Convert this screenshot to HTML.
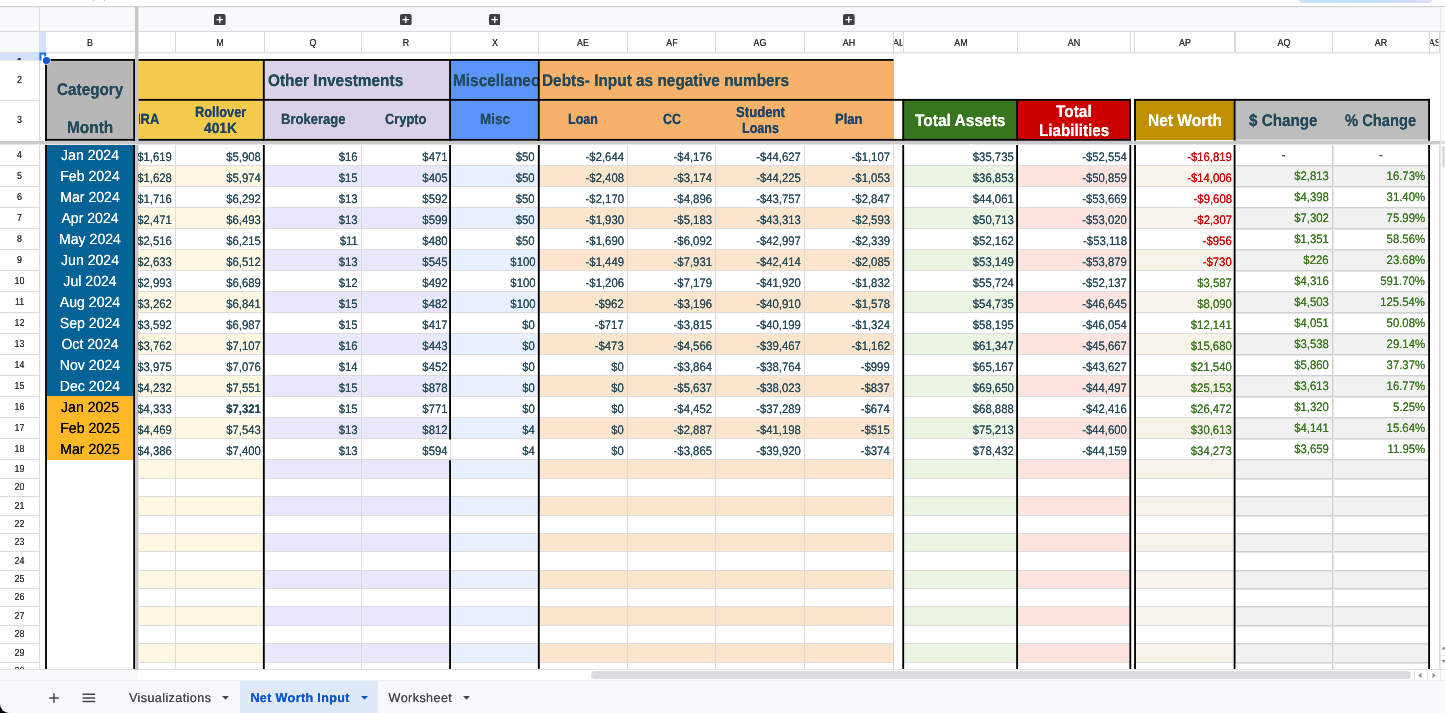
<!DOCTYPE html>
<html><head><meta charset="utf-8"><title>Net Worth Input</title>
<style>
html,body{margin:0;padding:0;background:#fff}
body{width:1445px;height:713px;overflow:hidden;position:relative;font-family:"Liberation Sans",sans-serif;text-rendering:geometricPrecision}
#s{position:absolute;left:0;top:0;width:1445px;height:713px;overflow:hidden;will-change:transform}
#s div,#s svg{position:absolute}
.ch{text-shadow:0 0 0.3px currentColor;font-size:10.2px;color:#333639;text-align:center;transform:scaleX(0.87)}
.rh{text-shadow:0 0 0.3px currentColor;font-size:10.2px;color:#333639;text-align:center;transform:scaleX(0.87)}
.d{font-size:12.4px;line-height:21px;height:21px;white-space:nowrap;overflow:hidden}
.d div{transform:scaleX(0.915);transform-origin:100% 50%;line-height:21px;text-shadow:0 0 0.4px currentColor}
.mo{text-shadow:0 0 0.4px currentColor;font-size:14.7px;line-height:22px;height:22px;text-align:center;white-space:nowrap;transform:scaleX(0.96)}
</style></head><body><div id="s">
<div style="left:0px;top:0px;width:1445px;height:6px;background:#fff;"></div>
<div style="left:1298px;top:-8px;width:135px;height:10.5px;border-radius:6px;background:linear-gradient(90deg,#c9e6ff,#c4dcff 60%,#dfe0ff)"></div>
<div style="left:0px;top:6px;width:1445px;height:1px;background:#d2d2d2;"></div>
<div style="left:0px;top:7px;width:1445px;height:24px;background:#f8f9fa;"></div>
<div style="left:0px;top:7px;width:1445px;height:1px;background:#f0f0f0;"></div>
<div style="left:0px;top:31px;width:1445px;height:1px;background:#d9dbd9;"></div>
<div style="left:0px;top:32px;width:1445px;height:20px;background:#fff;"></div>
<div style="left:0px;top:32px;width:39px;height:20px;background:#f8f9fa;"></div>
<div style="left:0px;top:52px;width:1445px;height:1px;background:#dfe0df;"></div>
<div style="left:0px;top:53px;width:1445px;height:1px;background:#eeefee;"></div>
<div style="left:93px;top:0px;width:1px;height:1px;background:#bbb;"></div>
<div style="left:104px;top:0px;width:1px;height:1px;background:#bbb;"></div>
<div style="left:40px;top:32px;width:6px;height:21px;background:#d3e3fd;"></div>
<div class="ch" style="left:60px;top:33px;width:60px;height:20px;line-height:21px">B</div>
<div class="ch" style="left:190px;top:33px;width:60px;height:20px;line-height:21px">M</div>
<div class="ch" style="left:283px;top:33px;width:60px;height:20px;line-height:21px">Q</div>
<div class="ch" style="left:376px;top:33px;width:60px;height:20px;line-height:21px">R</div>
<div class="ch" style="left:464.5px;top:33px;width:60px;height:20px;line-height:21px">X</div>
<div class="ch" style="left:553px;top:33px;width:60px;height:20px;line-height:21px">AE</div>
<div class="ch" style="left:641.5px;top:33px;width:60px;height:20px;line-height:21px">AF</div>
<div class="ch" style="left:730px;top:33px;width:60px;height:20px;line-height:21px">AG</div>
<div class="ch" style="left:819px;top:33px;width:60px;height:20px;line-height:21px">AH</div>
<div class="ch" style="left:930.5px;top:33px;width:60px;height:20px;line-height:21px">AM</div>
<div class="ch" style="left:1044px;top:33px;width:60px;height:20px;line-height:21px">AN</div>
<div class="ch" style="left:1154.5px;top:33px;width:60px;height:20px;line-height:21px">AP</div>
<div class="ch" style="left:1253.5px;top:33px;width:60px;height:20px;line-height:21px">AQ</div>
<div class="ch" style="left:1351px;top:33px;width:60px;height:20px;line-height:21px">AR</div>
<div class="ch" style="left:894px;top:33px;width:9px;height:20px;line-height:21px;overflow:hidden;"><span style="margin-left:-2px;display:inline-block;width:13px">AL</span></div>
<div class="ch" style="left:1430px;top:33px;width:9px;height:20px;line-height:21px;overflow:hidden;"><span style="margin-left:-2px;display:inline-block;width:13px">AS</span></div>
<div style="left:175px;top:32px;width:1px;height:20px;background:#d9dbd9;"></div>
<div style="left:264px;top:32px;width:1px;height:20px;background:#d9dbd9;"></div>
<div style="left:361px;top:32px;width:1px;height:20px;background:#d9dbd9;"></div>
<div style="left:450px;top:32px;width:1px;height:20px;background:#d9dbd9;"></div>
<div style="left:538px;top:32px;width:1px;height:20px;background:#d9dbd9;"></div>
<div style="left:627px;top:32px;width:1px;height:20px;background:#d9dbd9;"></div>
<div style="left:715px;top:32px;width:1px;height:20px;background:#d9dbd9;"></div>
<div style="left:804px;top:32px;width:1px;height:20px;background:#d9dbd9;"></div>
<div style="left:893px;top:32px;width:1px;height:20px;background:#d9dbd9;"></div>
<div style="left:903px;top:32px;width:1px;height:20px;background:#d9dbd9;"></div>
<div style="left:1017px;top:32px;width:1px;height:20px;background:#d9dbd9;"></div>
<div style="left:1130px;top:32px;width:1px;height:20px;background:#d9dbd9;"></div>
<div style="left:1134px;top:32px;width:1px;height:20px;background:#d9dbd9;"></div>
<div style="left:1332px;top:32px;width:1px;height:20px;background:#d9dbd9;"></div>
<div style="left:1429px;top:32px;width:1px;height:20px;background:#d9dbd9;"></div>
<div style="left:1439px;top:32px;width:1px;height:20px;background:#d9dbd9;"></div>
<div style="left:1234px;top:32px;width:2px;height:20px;background:#d9dbd9;"></div>
<div style="left:39px;top:7px;width:1px;height:663px;background:#dcdcdc;"></div>
<div style="left:1440px;top:7px;width:5px;height:24px;background:#f8f9fa;"></div>
<div style="left:1440px;top:32px;width:5px;height:638px;background:#fbfbfb;"></div>
<div style="left:1440px;top:7px;width:1px;height:663px;background:#e6e6e6;"></div>
<div style="left:1441px;top:141px;width:4px;height:3px;background:#d6e0f0;"></div>
<div style="left:1442px;top:146px;width:8px;height:22px;border-radius:3px;background:#dcdee2"></div>
<svg style="left:214.2px;top:13.7px" width="11.6" height="11.4" viewBox="0 0 11.6 11.4"><rect width="11.6" height="11.4" rx="2" fill="#3c4043"/><path d="M5.8 2.4v6.6M2.5 5.7h6.6" stroke="#fff" stroke-width="1.3"/></svg>
<svg style="left:400.2px;top:13.7px" width="11.6" height="11.4" viewBox="0 0 11.6 11.4"><rect width="11.6" height="11.4" rx="2" fill="#3c4043"/><path d="M5.8 2.4v6.6M2.5 5.7h6.6" stroke="#fff" stroke-width="1.3"/></svg>
<svg style="left:488.7px;top:13.7px" width="11.6" height="11.4" viewBox="0 0 11.6 11.4"><rect width="11.6" height="11.4" rx="2" fill="#3c4043"/><path d="M5.8 2.4v6.6M2.5 5.7h6.6" stroke="#fff" stroke-width="1.3"/></svg>
<svg style="left:843.2px;top:13.7px" width="11.6" height="11.4" viewBox="0 0 11.6 11.4"><rect width="11.6" height="11.4" rx="2" fill="#3c4043"/><path d="M5.8 2.4v6.6M2.5 5.7h6.6" stroke="#fff" stroke-width="1.3"/></svg>
<div style="left:0px;top:53px;width:39px;height:7px;background:#d3e3fd;"></div>
<div style="left:0;top:53px;width:39px;height:7px;overflow:hidden"><div class="rh" style="left:0;top:4px;width:39px;height:11px;line-height:11px;color:#1f2a4a;font-weight:bold;transform:translateY(-0.1px) scaleX(0.9)">1</div></div>
<div style="left:0px;top:60px;width:39px;height:1px;background:#e8e8e8;"></div>
<div style="left:0px;top:100px;width:39px;height:1px;background:#dbdbdb;"></div>
<div class="rh" style="left:0;top:61px;width:39px;height:39px;line-height:39px">2</div>
<div class="rh" style="left:0;top:101px;width:39px;height:39px;line-height:39px">3</div>
<div class="rh" style="left:0;top:145px;width:39px;height:20px;line-height:21px">4</div>
<div style="left:0px;top:165px;width:39px;height:1px;background:#dbdbdb;"></div>
<div class="rh" style="left:0;top:166px;width:39px;height:20px;line-height:21px">5</div>
<div style="left:0px;top:186px;width:39px;height:1px;background:#dbdbdb;"></div>
<div class="rh" style="left:0;top:187px;width:39px;height:20px;line-height:21px">6</div>
<div style="left:0px;top:207px;width:39px;height:1px;background:#dbdbdb;"></div>
<div class="rh" style="left:0;top:208px;width:39px;height:20px;line-height:21px">7</div>
<div style="left:0px;top:228px;width:39px;height:1px;background:#dbdbdb;"></div>
<div class="rh" style="left:0;top:229px;width:39px;height:20px;line-height:21px">8</div>
<div style="left:0px;top:249px;width:39px;height:1px;background:#dbdbdb;"></div>
<div class="rh" style="left:0;top:250px;width:39px;height:20px;line-height:21px">9</div>
<div style="left:0px;top:270px;width:39px;height:1px;background:#dbdbdb;"></div>
<div class="rh" style="left:0;top:271px;width:39px;height:20px;line-height:21px">10</div>
<div style="left:0px;top:291px;width:39px;height:1px;background:#dbdbdb;"></div>
<div class="rh" style="left:0;top:292px;width:39px;height:20px;line-height:21px">11</div>
<div style="left:0px;top:312px;width:39px;height:1px;background:#dbdbdb;"></div>
<div class="rh" style="left:0;top:313px;width:39px;height:20px;line-height:21px">12</div>
<div style="left:0px;top:333px;width:39px;height:1px;background:#dbdbdb;"></div>
<div class="rh" style="left:0;top:334px;width:39px;height:20px;line-height:21px">13</div>
<div style="left:0px;top:354px;width:39px;height:1px;background:#dbdbdb;"></div>
<div class="rh" style="left:0;top:355px;width:39px;height:20px;line-height:21px">14</div>
<div style="left:0px;top:375px;width:39px;height:1px;background:#dbdbdb;"></div>
<div class="rh" style="left:0;top:376px;width:39px;height:20px;line-height:21px">15</div>
<div style="left:0px;top:396px;width:39px;height:1px;background:#dbdbdb;"></div>
<div class="rh" style="left:0;top:397px;width:39px;height:20px;line-height:21px">16</div>
<div style="left:0px;top:417px;width:39px;height:1px;background:#dbdbdb;"></div>
<div class="rh" style="left:0;top:418px;width:39px;height:20px;line-height:21px">17</div>
<div style="left:0px;top:438px;width:39px;height:1px;background:#dbdbdb;"></div>
<div class="rh" style="left:0;top:439px;width:39px;height:20px;line-height:21px">18</div>
<div style="left:0px;top:459px;width:39px;height:1px;background:#dbdbdb;"></div>
<div class="rh" style="left:0;top:460px;width:39px;height:18px;line-height:19px">19</div>
<div style="left:0px;top:478px;width:39px;height:1px;background:#dbdbdb;"></div>
<div class="rh" style="left:0;top:479px;width:39px;height:17px;line-height:18px">20</div>
<div style="left:0px;top:496px;width:39px;height:1px;background:#dbdbdb;"></div>
<div class="rh" style="left:0;top:497px;width:39px;height:18px;line-height:19px">21</div>
<div style="left:0px;top:515px;width:39px;height:1px;background:#dbdbdb;"></div>
<div class="rh" style="left:0;top:516px;width:39px;height:17px;line-height:18px">22</div>
<div style="left:0px;top:533px;width:39px;height:1px;background:#dbdbdb;"></div>
<div class="rh" style="left:0;top:534px;width:39px;height:17px;line-height:18px">23</div>
<div style="left:0px;top:551px;width:39px;height:1px;background:#dbdbdb;"></div>
<div class="rh" style="left:0;top:552px;width:39px;height:18px;line-height:19px">24</div>
<div style="left:0px;top:570px;width:39px;height:1px;background:#dbdbdb;"></div>
<div class="rh" style="left:0;top:571px;width:39px;height:17px;line-height:18px">25</div>
<div style="left:0px;top:588px;width:39px;height:1px;background:#dbdbdb;"></div>
<div class="rh" style="left:0;top:589px;width:39px;height:17px;line-height:18px">26</div>
<div style="left:0px;top:606px;width:39px;height:1px;background:#dbdbdb;"></div>
<div class="rh" style="left:0;top:607px;width:39px;height:18px;line-height:19px">27</div>
<div style="left:0px;top:625px;width:39px;height:1px;background:#dbdbdb;"></div>
<div class="rh" style="left:0;top:626px;width:39px;height:17px;line-height:18px">28</div>
<div style="left:0px;top:643px;width:39px;height:1px;background:#dbdbdb;"></div>
<div class="rh" style="left:0;top:644px;width:39px;height:18px;line-height:19px">29</div>
<div style="left:0px;top:662px;width:39px;height:1px;background:#dbdbdb;"></div>
<div class="rh" style="left:0;top:663px;width:39px;height:6px;overflow:hidden;line-height:18px">30</div>
<div style="left:138px;top:166px;width:38px;height:20px;background:#fef8e3;"></div>
<div style="left:176px;top:166px;width:89px;height:20px;background:#fef8e3;"></div>
<div style="left:265px;top:166px;width:97px;height:20px;background:#e8e7fc;"></div>
<div style="left:362px;top:166px;width:89px;height:20px;background:#e8e7fc;"></div>
<div style="left:451px;top:166px;width:88px;height:20px;background:#e8f0fe;"></div>
<div style="left:539px;top:166px;width:89px;height:20px;background:#fce5cd;"></div>
<div style="left:628px;top:166px;width:88px;height:20px;background:#fce5cd;"></div>
<div style="left:716px;top:166px;width:89px;height:20px;background:#fce5cd;"></div>
<div style="left:805px;top:166px;width:89px;height:20px;background:#fce5cd;"></div>
<div style="left:904px;top:166px;width:114px;height:20px;background:#ebf5e2;"></div>
<div style="left:1018px;top:166px;width:113px;height:20px;background:#fde4df;"></div>
<div style="left:1135px;top:166px;width:100px;height:20px;background:#f8f3ea;"></div>
<div style="left:1235px;top:166px;width:98px;height:20px;background:#f1f1f1;"></div>
<div style="left:1333px;top:166px;width:97px;height:20px;background:#f1f1f1;"></div>
<div style="left:138px;top:208px;width:38px;height:20px;background:#fef8e3;"></div>
<div style="left:176px;top:208px;width:89px;height:20px;background:#fef8e3;"></div>
<div style="left:265px;top:208px;width:97px;height:20px;background:#e8e7fc;"></div>
<div style="left:362px;top:208px;width:89px;height:20px;background:#e8e7fc;"></div>
<div style="left:451px;top:208px;width:88px;height:20px;background:#e8f0fe;"></div>
<div style="left:539px;top:208px;width:89px;height:20px;background:#fce5cd;"></div>
<div style="left:628px;top:208px;width:88px;height:20px;background:#fce5cd;"></div>
<div style="left:716px;top:208px;width:89px;height:20px;background:#fce5cd;"></div>
<div style="left:805px;top:208px;width:89px;height:20px;background:#fce5cd;"></div>
<div style="left:904px;top:208px;width:114px;height:20px;background:#ebf5e2;"></div>
<div style="left:1018px;top:208px;width:113px;height:20px;background:#fde4df;"></div>
<div style="left:1135px;top:208px;width:100px;height:20px;background:#f8f3ea;"></div>
<div style="left:1235px;top:208px;width:98px;height:20px;background:#f1f1f1;"></div>
<div style="left:1333px;top:208px;width:97px;height:20px;background:#f1f1f1;"></div>
<div style="left:138px;top:250px;width:38px;height:20px;background:#fef8e3;"></div>
<div style="left:176px;top:250px;width:89px;height:20px;background:#fef8e3;"></div>
<div style="left:265px;top:250px;width:97px;height:20px;background:#e8e7fc;"></div>
<div style="left:362px;top:250px;width:89px;height:20px;background:#e8e7fc;"></div>
<div style="left:451px;top:250px;width:88px;height:20px;background:#e8f0fe;"></div>
<div style="left:539px;top:250px;width:89px;height:20px;background:#fce5cd;"></div>
<div style="left:628px;top:250px;width:88px;height:20px;background:#fce5cd;"></div>
<div style="left:716px;top:250px;width:89px;height:20px;background:#fce5cd;"></div>
<div style="left:805px;top:250px;width:89px;height:20px;background:#fce5cd;"></div>
<div style="left:904px;top:250px;width:114px;height:20px;background:#ebf5e2;"></div>
<div style="left:1018px;top:250px;width:113px;height:20px;background:#fde4df;"></div>
<div style="left:1135px;top:250px;width:100px;height:20px;background:#f8f3ea;"></div>
<div style="left:1235px;top:250px;width:98px;height:20px;background:#f1f1f1;"></div>
<div style="left:1333px;top:250px;width:97px;height:20px;background:#f1f1f1;"></div>
<div style="left:138px;top:292px;width:38px;height:20px;background:#fef8e3;"></div>
<div style="left:176px;top:292px;width:89px;height:20px;background:#fef8e3;"></div>
<div style="left:265px;top:292px;width:97px;height:20px;background:#e8e7fc;"></div>
<div style="left:362px;top:292px;width:89px;height:20px;background:#e8e7fc;"></div>
<div style="left:451px;top:292px;width:88px;height:20px;background:#e8f0fe;"></div>
<div style="left:539px;top:292px;width:89px;height:20px;background:#fce5cd;"></div>
<div style="left:628px;top:292px;width:88px;height:20px;background:#fce5cd;"></div>
<div style="left:716px;top:292px;width:89px;height:20px;background:#fce5cd;"></div>
<div style="left:805px;top:292px;width:89px;height:20px;background:#fce5cd;"></div>
<div style="left:904px;top:292px;width:114px;height:20px;background:#ebf5e2;"></div>
<div style="left:1018px;top:292px;width:113px;height:20px;background:#fde4df;"></div>
<div style="left:1135px;top:292px;width:100px;height:20px;background:#f8f3ea;"></div>
<div style="left:1235px;top:292px;width:98px;height:20px;background:#f1f1f1;"></div>
<div style="left:1333px;top:292px;width:97px;height:20px;background:#f1f1f1;"></div>
<div style="left:138px;top:334px;width:38px;height:20px;background:#fef8e3;"></div>
<div style="left:176px;top:334px;width:89px;height:20px;background:#fef8e3;"></div>
<div style="left:265px;top:334px;width:97px;height:20px;background:#e8e7fc;"></div>
<div style="left:362px;top:334px;width:89px;height:20px;background:#e8e7fc;"></div>
<div style="left:451px;top:334px;width:88px;height:20px;background:#e8f0fe;"></div>
<div style="left:539px;top:334px;width:89px;height:20px;background:#fce5cd;"></div>
<div style="left:628px;top:334px;width:88px;height:20px;background:#fce5cd;"></div>
<div style="left:716px;top:334px;width:89px;height:20px;background:#fce5cd;"></div>
<div style="left:805px;top:334px;width:89px;height:20px;background:#fce5cd;"></div>
<div style="left:904px;top:334px;width:114px;height:20px;background:#ebf5e2;"></div>
<div style="left:1018px;top:334px;width:113px;height:20px;background:#fde4df;"></div>
<div style="left:1135px;top:334px;width:100px;height:20px;background:#f8f3ea;"></div>
<div style="left:1235px;top:334px;width:98px;height:20px;background:#f1f1f1;"></div>
<div style="left:1333px;top:334px;width:97px;height:20px;background:#f1f1f1;"></div>
<div style="left:138px;top:376px;width:38px;height:20px;background:#fef8e3;"></div>
<div style="left:176px;top:376px;width:89px;height:20px;background:#fef8e3;"></div>
<div style="left:265px;top:376px;width:97px;height:20px;background:#e8e7fc;"></div>
<div style="left:362px;top:376px;width:89px;height:20px;background:#e8e7fc;"></div>
<div style="left:451px;top:376px;width:88px;height:20px;background:#e8f0fe;"></div>
<div style="left:539px;top:376px;width:89px;height:20px;background:#fce5cd;"></div>
<div style="left:628px;top:376px;width:88px;height:20px;background:#fce5cd;"></div>
<div style="left:716px;top:376px;width:89px;height:20px;background:#fce5cd;"></div>
<div style="left:805px;top:376px;width:89px;height:20px;background:#fce5cd;"></div>
<div style="left:904px;top:376px;width:114px;height:20px;background:#ebf5e2;"></div>
<div style="left:1018px;top:376px;width:113px;height:20px;background:#fde4df;"></div>
<div style="left:1135px;top:376px;width:100px;height:20px;background:#f8f3ea;"></div>
<div style="left:1235px;top:376px;width:98px;height:20px;background:#f1f1f1;"></div>
<div style="left:1333px;top:376px;width:97px;height:20px;background:#f1f1f1;"></div>
<div style="left:138px;top:418px;width:38px;height:20px;background:#fef8e3;"></div>
<div style="left:176px;top:418px;width:89px;height:20px;background:#fef8e3;"></div>
<div style="left:265px;top:418px;width:97px;height:20px;background:#e8e7fc;"></div>
<div style="left:362px;top:418px;width:89px;height:20px;background:#e8e7fc;"></div>
<div style="left:451px;top:418px;width:88px;height:20px;background:#e8f0fe;"></div>
<div style="left:539px;top:418px;width:89px;height:20px;background:#fce5cd;"></div>
<div style="left:628px;top:418px;width:88px;height:20px;background:#fce5cd;"></div>
<div style="left:716px;top:418px;width:89px;height:20px;background:#fce5cd;"></div>
<div style="left:805px;top:418px;width:89px;height:20px;background:#fce5cd;"></div>
<div style="left:904px;top:418px;width:114px;height:20px;background:#ebf5e2;"></div>
<div style="left:1018px;top:418px;width:113px;height:20px;background:#fde4df;"></div>
<div style="left:1135px;top:418px;width:100px;height:20px;background:#f8f3ea;"></div>
<div style="left:1235px;top:418px;width:98px;height:20px;background:#f1f1f1;"></div>
<div style="left:1333px;top:418px;width:97px;height:20px;background:#f1f1f1;"></div>
<div style="left:138px;top:460px;width:38px;height:18px;background:#fef8e3;"></div>
<div style="left:176px;top:460px;width:89px;height:18px;background:#fef8e3;"></div>
<div style="left:265px;top:460px;width:97px;height:18px;background:#e8e7fc;"></div>
<div style="left:362px;top:460px;width:89px;height:18px;background:#e8e7fc;"></div>
<div style="left:451px;top:460px;width:88px;height:18px;background:#e8f0fe;"></div>
<div style="left:539px;top:460px;width:89px;height:18px;background:#fce5cd;"></div>
<div style="left:628px;top:460px;width:88px;height:18px;background:#fce5cd;"></div>
<div style="left:716px;top:460px;width:89px;height:18px;background:#fce5cd;"></div>
<div style="left:805px;top:460px;width:89px;height:18px;background:#fce5cd;"></div>
<div style="left:904px;top:460px;width:114px;height:18px;background:#ebf5e2;"></div>
<div style="left:1018px;top:460px;width:113px;height:18px;background:#fde4df;"></div>
<div style="left:1135px;top:460px;width:100px;height:18px;background:#f8f3ea;"></div>
<div style="left:1235px;top:460px;width:98px;height:18px;background:#f1f1f1;"></div>
<div style="left:1333px;top:460px;width:97px;height:18px;background:#f1f1f1;"></div>
<div style="left:138px;top:497px;width:38px;height:18px;background:#fef8e3;"></div>
<div style="left:176px;top:497px;width:89px;height:18px;background:#fef8e3;"></div>
<div style="left:265px;top:497px;width:97px;height:18px;background:#e8e7fc;"></div>
<div style="left:362px;top:497px;width:89px;height:18px;background:#e8e7fc;"></div>
<div style="left:451px;top:497px;width:88px;height:18px;background:#e8f0fe;"></div>
<div style="left:539px;top:497px;width:89px;height:18px;background:#fce5cd;"></div>
<div style="left:628px;top:497px;width:88px;height:18px;background:#fce5cd;"></div>
<div style="left:716px;top:497px;width:89px;height:18px;background:#fce5cd;"></div>
<div style="left:805px;top:497px;width:89px;height:18px;background:#fce5cd;"></div>
<div style="left:904px;top:497px;width:114px;height:18px;background:#ebf5e2;"></div>
<div style="left:1018px;top:497px;width:113px;height:18px;background:#fde4df;"></div>
<div style="left:1135px;top:497px;width:100px;height:18px;background:#f8f3ea;"></div>
<div style="left:1235px;top:497px;width:98px;height:18px;background:#f1f1f1;"></div>
<div style="left:1333px;top:497px;width:97px;height:18px;background:#f1f1f1;"></div>
<div style="left:138px;top:534px;width:38px;height:17px;background:#fef8e3;"></div>
<div style="left:176px;top:534px;width:89px;height:17px;background:#fef8e3;"></div>
<div style="left:265px;top:534px;width:97px;height:17px;background:#e8e7fc;"></div>
<div style="left:362px;top:534px;width:89px;height:17px;background:#e8e7fc;"></div>
<div style="left:451px;top:534px;width:88px;height:17px;background:#e8f0fe;"></div>
<div style="left:539px;top:534px;width:89px;height:17px;background:#fce5cd;"></div>
<div style="left:628px;top:534px;width:88px;height:17px;background:#fce5cd;"></div>
<div style="left:716px;top:534px;width:89px;height:17px;background:#fce5cd;"></div>
<div style="left:805px;top:534px;width:89px;height:17px;background:#fce5cd;"></div>
<div style="left:904px;top:534px;width:114px;height:17px;background:#ebf5e2;"></div>
<div style="left:1018px;top:534px;width:113px;height:17px;background:#fde4df;"></div>
<div style="left:1135px;top:534px;width:100px;height:17px;background:#f8f3ea;"></div>
<div style="left:1235px;top:534px;width:98px;height:17px;background:#f1f1f1;"></div>
<div style="left:1333px;top:534px;width:97px;height:17px;background:#f1f1f1;"></div>
<div style="left:138px;top:571px;width:38px;height:17px;background:#fef8e3;"></div>
<div style="left:176px;top:571px;width:89px;height:17px;background:#fef8e3;"></div>
<div style="left:265px;top:571px;width:97px;height:17px;background:#e8e7fc;"></div>
<div style="left:362px;top:571px;width:89px;height:17px;background:#e8e7fc;"></div>
<div style="left:451px;top:571px;width:88px;height:17px;background:#e8f0fe;"></div>
<div style="left:539px;top:571px;width:89px;height:17px;background:#fce5cd;"></div>
<div style="left:628px;top:571px;width:88px;height:17px;background:#fce5cd;"></div>
<div style="left:716px;top:571px;width:89px;height:17px;background:#fce5cd;"></div>
<div style="left:805px;top:571px;width:89px;height:17px;background:#fce5cd;"></div>
<div style="left:904px;top:571px;width:114px;height:17px;background:#ebf5e2;"></div>
<div style="left:1018px;top:571px;width:113px;height:17px;background:#fde4df;"></div>
<div style="left:1135px;top:571px;width:100px;height:17px;background:#f8f3ea;"></div>
<div style="left:1235px;top:571px;width:98px;height:17px;background:#f1f1f1;"></div>
<div style="left:1333px;top:571px;width:97px;height:17px;background:#f1f1f1;"></div>
<div style="left:138px;top:607px;width:38px;height:18px;background:#fef8e3;"></div>
<div style="left:176px;top:607px;width:89px;height:18px;background:#fef8e3;"></div>
<div style="left:265px;top:607px;width:97px;height:18px;background:#e8e7fc;"></div>
<div style="left:362px;top:607px;width:89px;height:18px;background:#e8e7fc;"></div>
<div style="left:451px;top:607px;width:88px;height:18px;background:#e8f0fe;"></div>
<div style="left:539px;top:607px;width:89px;height:18px;background:#fce5cd;"></div>
<div style="left:628px;top:607px;width:88px;height:18px;background:#fce5cd;"></div>
<div style="left:716px;top:607px;width:89px;height:18px;background:#fce5cd;"></div>
<div style="left:805px;top:607px;width:89px;height:18px;background:#fce5cd;"></div>
<div style="left:904px;top:607px;width:114px;height:18px;background:#ebf5e2;"></div>
<div style="left:1018px;top:607px;width:113px;height:18px;background:#fde4df;"></div>
<div style="left:1135px;top:607px;width:100px;height:18px;background:#f8f3ea;"></div>
<div style="left:1235px;top:607px;width:98px;height:18px;background:#f1f1f1;"></div>
<div style="left:1333px;top:607px;width:97px;height:18px;background:#f1f1f1;"></div>
<div style="left:138px;top:644px;width:38px;height:18px;background:#fef8e3;"></div>
<div style="left:176px;top:644px;width:89px;height:18px;background:#fef8e3;"></div>
<div style="left:265px;top:644px;width:97px;height:18px;background:#e8e7fc;"></div>
<div style="left:362px;top:644px;width:89px;height:18px;background:#e8e7fc;"></div>
<div style="left:451px;top:644px;width:88px;height:18px;background:#e8f0fe;"></div>
<div style="left:539px;top:644px;width:89px;height:18px;background:#fce5cd;"></div>
<div style="left:628px;top:644px;width:88px;height:18px;background:#fce5cd;"></div>
<div style="left:716px;top:644px;width:89px;height:18px;background:#fce5cd;"></div>
<div style="left:805px;top:644px;width:89px;height:18px;background:#fce5cd;"></div>
<div style="left:904px;top:644px;width:114px;height:18px;background:#ebf5e2;"></div>
<div style="left:1018px;top:644px;width:113px;height:18px;background:#fde4df;"></div>
<div style="left:1135px;top:644px;width:100px;height:18px;background:#f8f3ea;"></div>
<div style="left:1235px;top:644px;width:98px;height:18px;background:#f1f1f1;"></div>
<div style="left:1333px;top:644px;width:97px;height:18px;background:#f1f1f1;"></div>
<div style="left:139px;top:165px;width:1301px;height:1px;background:#dbdbdb;"></div>
<div style="left:139px;top:186px;width:1301px;height:1px;background:#dbdbdb;"></div>
<div style="left:139px;top:207px;width:1301px;height:1px;background:#dbdbdb;"></div>
<div style="left:139px;top:228px;width:1301px;height:1px;background:#dbdbdb;"></div>
<div style="left:139px;top:249px;width:1301px;height:1px;background:#dbdbdb;"></div>
<div style="left:139px;top:270px;width:1301px;height:1px;background:#dbdbdb;"></div>
<div style="left:139px;top:291px;width:1301px;height:1px;background:#dbdbdb;"></div>
<div style="left:139px;top:312px;width:1301px;height:1px;background:#dbdbdb;"></div>
<div style="left:139px;top:333px;width:1301px;height:1px;background:#dbdbdb;"></div>
<div style="left:139px;top:354px;width:1301px;height:1px;background:#dbdbdb;"></div>
<div style="left:139px;top:375px;width:1301px;height:1px;background:#dbdbdb;"></div>
<div style="left:139px;top:396px;width:1301px;height:1px;background:#dbdbdb;"></div>
<div style="left:139px;top:417px;width:1301px;height:1px;background:#dbdbdb;"></div>
<div style="left:139px;top:438px;width:1301px;height:1px;background:#dbdbdb;"></div>
<div style="left:139px;top:459px;width:1301px;height:1px;background:#dbdbdb;"></div>
<div style="left:139px;top:478px;width:1301px;height:1px;background:#dbdbdb;"></div>
<div style="left:139px;top:496px;width:1301px;height:1px;background:#dbdbdb;"></div>
<div style="left:139px;top:515px;width:1301px;height:1px;background:#dbdbdb;"></div>
<div style="left:139px;top:533px;width:1301px;height:1px;background:#dbdbdb;"></div>
<div style="left:139px;top:551px;width:1301px;height:1px;background:#dbdbdb;"></div>
<div style="left:139px;top:570px;width:1301px;height:1px;background:#dbdbdb;"></div>
<div style="left:139px;top:588px;width:1301px;height:1px;background:#dbdbdb;"></div>
<div style="left:139px;top:606px;width:1301px;height:1px;background:#dbdbdb;"></div>
<div style="left:139px;top:625px;width:1301px;height:1px;background:#dbdbdb;"></div>
<div style="left:139px;top:643px;width:1301px;height:1px;background:#dbdbdb;"></div>
<div style="left:139px;top:662px;width:1301px;height:1px;background:#dbdbdb;"></div>
<div style="left:1236px;top:165px;width:193px;height:1px;background:#d0d0d0;"></div>
<div style="left:1236px;top:166px;width:193px;height:1px;background:#e4e4e4;"></div>
<div style="left:1236px;top:186px;width:193px;height:1px;background:#d0d0d0;"></div>
<div style="left:1236px;top:187px;width:193px;height:1px;background:#e4e4e4;"></div>
<div style="left:1236px;top:207px;width:193px;height:1px;background:#d0d0d0;"></div>
<div style="left:1236px;top:208px;width:193px;height:1px;background:#e4e4e4;"></div>
<div style="left:1236px;top:228px;width:193px;height:1px;background:#d0d0d0;"></div>
<div style="left:1236px;top:229px;width:193px;height:1px;background:#e4e4e4;"></div>
<div style="left:1236px;top:249px;width:193px;height:1px;background:#d0d0d0;"></div>
<div style="left:1236px;top:250px;width:193px;height:1px;background:#e4e4e4;"></div>
<div style="left:1236px;top:270px;width:193px;height:1px;background:#d0d0d0;"></div>
<div style="left:1236px;top:271px;width:193px;height:1px;background:#e4e4e4;"></div>
<div style="left:1236px;top:291px;width:193px;height:1px;background:#d0d0d0;"></div>
<div style="left:1236px;top:292px;width:193px;height:1px;background:#e4e4e4;"></div>
<div style="left:1236px;top:312px;width:193px;height:1px;background:#d0d0d0;"></div>
<div style="left:1236px;top:313px;width:193px;height:1px;background:#e4e4e4;"></div>
<div style="left:1236px;top:333px;width:193px;height:1px;background:#d0d0d0;"></div>
<div style="left:1236px;top:334px;width:193px;height:1px;background:#e4e4e4;"></div>
<div style="left:1236px;top:354px;width:193px;height:1px;background:#d0d0d0;"></div>
<div style="left:1236px;top:355px;width:193px;height:1px;background:#e4e4e4;"></div>
<div style="left:1236px;top:375px;width:193px;height:1px;background:#d0d0d0;"></div>
<div style="left:1236px;top:376px;width:193px;height:1px;background:#e4e4e4;"></div>
<div style="left:1236px;top:396px;width:193px;height:1px;background:#d0d0d0;"></div>
<div style="left:1236px;top:397px;width:193px;height:1px;background:#e4e4e4;"></div>
<div style="left:1236px;top:417px;width:193px;height:1px;background:#d0d0d0;"></div>
<div style="left:1236px;top:418px;width:193px;height:1px;background:#e4e4e4;"></div>
<div style="left:1236px;top:438px;width:193px;height:1px;background:#d0d0d0;"></div>
<div style="left:1236px;top:439px;width:193px;height:1px;background:#e4e4e4;"></div>
<div style="left:1236px;top:459px;width:193px;height:1px;background:#d0d0d0;"></div>
<div style="left:1236px;top:460px;width:193px;height:1px;background:#e4e4e4;"></div>
<div style="left:1236px;top:478px;width:193px;height:1px;background:#d0d0d0;"></div>
<div style="left:1236px;top:479px;width:193px;height:1px;background:#e4e4e4;"></div>
<div style="left:1236px;top:496px;width:193px;height:1px;background:#d0d0d0;"></div>
<div style="left:1236px;top:497px;width:193px;height:1px;background:#e4e4e4;"></div>
<div style="left:1236px;top:515px;width:193px;height:1px;background:#d0d0d0;"></div>
<div style="left:1236px;top:516px;width:193px;height:1px;background:#e4e4e4;"></div>
<div style="left:1236px;top:533px;width:193px;height:1px;background:#d0d0d0;"></div>
<div style="left:1236px;top:534px;width:193px;height:1px;background:#e4e4e4;"></div>
<div style="left:1236px;top:551px;width:193px;height:1px;background:#d0d0d0;"></div>
<div style="left:1236px;top:552px;width:193px;height:1px;background:#e4e4e4;"></div>
<div style="left:1236px;top:570px;width:193px;height:1px;background:#d0d0d0;"></div>
<div style="left:1236px;top:571px;width:193px;height:1px;background:#e4e4e4;"></div>
<div style="left:1236px;top:588px;width:193px;height:1px;background:#d0d0d0;"></div>
<div style="left:1236px;top:589px;width:193px;height:1px;background:#e4e4e4;"></div>
<div style="left:1236px;top:606px;width:193px;height:1px;background:#d0d0d0;"></div>
<div style="left:1236px;top:607px;width:193px;height:1px;background:#e4e4e4;"></div>
<div style="left:1236px;top:625px;width:193px;height:1px;background:#d0d0d0;"></div>
<div style="left:1236px;top:626px;width:193px;height:1px;background:#e4e4e4;"></div>
<div style="left:1236px;top:643px;width:193px;height:1px;background:#d0d0d0;"></div>
<div style="left:1236px;top:644px;width:193px;height:1px;background:#e4e4e4;"></div>
<div style="left:1236px;top:662px;width:193px;height:1px;background:#d0d0d0;"></div>
<div style="left:1236px;top:663px;width:193px;height:1px;background:#e4e4e4;"></div>
<div style="left:175px;top:145px;width:1px;height:524px;background:#dbdbdb;"></div>
<div style="left:264px;top:145px;width:1px;height:524px;background:#dbdbdb;"></div>
<div style="left:361px;top:145px;width:1px;height:524px;background:#dbdbdb;"></div>
<div style="left:450px;top:145px;width:1px;height:524px;background:#dbdbdb;"></div>
<div style="left:538px;top:145px;width:1px;height:524px;background:#dbdbdb;"></div>
<div style="left:627px;top:145px;width:1px;height:524px;background:#dbdbdb;"></div>
<div style="left:715px;top:145px;width:1px;height:524px;background:#dbdbdb;"></div>
<div style="left:804px;top:145px;width:1px;height:524px;background:#dbdbdb;"></div>
<div style="left:893px;top:145px;width:1px;height:524px;background:#dbdbdb;"></div>
<div style="left:903px;top:145px;width:1px;height:524px;background:#dbdbdb;"></div>
<div style="left:1017px;top:145px;width:1px;height:524px;background:#dbdbdb;"></div>
<div style="left:1130px;top:145px;width:1px;height:524px;background:#dbdbdb;"></div>
<div style="left:1134px;top:145px;width:1px;height:524px;background:#dbdbdb;"></div>
<div style="left:1234px;top:145px;width:1px;height:524px;background:#dbdbdb;"></div>
<div style="left:1332px;top:145px;width:1px;height:524px;background:#dbdbdb;"></div>
<div style="left:1429px;top:145px;width:1px;height:524px;background:#dbdbdb;"></div>
<div style="left:1439px;top:145px;width:1px;height:524px;background:#dbdbdb;"></div>
<div style="left:1332px;top:145px;width:1px;height:524px;background:#d0d0d0;"></div>
<div style="left:1333px;top:145px;width:1px;height:524px;background:#e6e6e6;"></div>
<div style="left:894px;top:145px;width:8px;height:524px;background:#fff;"></div>
<div style="left:1131px;top:145px;width:3px;height:524px;background:#fff;"></div>
<div style="left:1430px;top:145px;width:9px;height:524px;background:#fff;"></div>
<div style="left:47px;top:145px;width:87px;height:251px;background:#036396;"></div>
<div style="left:47px;top:396px;width:87px;height:64px;background:#fdb827;"></div>
<div style="left:47px;top:460px;width:87px;height:209px;background:#fff;"></div>
<div class="mo" style="left:47px;top:145px;width:86px;color:#fff">Jan 2024</div>
<div class="mo" style="left:47px;top:166px;width:86px;color:#fff">Feb 2024</div>
<div class="mo" style="left:47px;top:187px;width:86px;color:#fff">Mar 2024</div>
<div class="mo" style="left:47px;top:208px;width:86px;color:#fff">Apr 2024</div>
<div class="mo" style="left:47px;top:229px;width:86px;color:#fff">May 2024</div>
<div class="mo" style="left:47px;top:250px;width:86px;color:#fff">Jun 2024</div>
<div class="mo" style="left:47px;top:271px;width:86px;color:#fff">Jul 2024</div>
<div class="mo" style="left:47px;top:292px;width:86px;color:#fff">Aug 2024</div>
<div class="mo" style="left:47px;top:313px;width:86px;color:#fff">Sep 2024</div>
<div class="mo" style="left:47px;top:334px;width:86px;color:#fff">Oct 2024</div>
<div class="mo" style="left:47px;top:355px;width:86px;color:#fff">Nov 2024</div>
<div class="mo" style="left:47px;top:376px;width:86px;color:#fff">Dec 2024</div>
<div class="mo" style="left:47px;top:397px;width:86px;color:#000">Jan 2025</div>
<div class="mo" style="left:47px;top:418px;width:86px;color:#000">Feb 2025</div>
<div class="mo" style="left:47px;top:439px;width:86px;color:#000">Mar 2025</div>
<div style="left:46px;top:60px;width:88px;height:80px;background:#b7b7b7;"></div>
<div style="left:138px;top:60px;width:126px;height:80px;background:#f6ca4c;"></div>
<div style="left:264px;top:60px;width:186px;height:80px;background:#d9d2e9;"></div>
<div style="left:450px;top:60px;width:89px;height:80px;background:#5b95f9;"></div>
<div style="left:539px;top:60px;width:355px;height:80px;background:#f6b26b;"></div>
<div style="left:903px;top:100px;width:114px;height:40px;background:#38761d;"></div>
<div style="left:1017px;top:100px;width:113px;height:40px;background:#cc0000;"></div>
<div style="left:1135px;top:100px;width:100px;height:40px;background:#bf9000;"></div>
<div style="left:1235px;top:100px;width:194px;height:39px;background:#bdbdbd;"></div>
<div style="left:1235px;top:139px;width:194px;height:2px;background:#d4d4d4;"></div>
<svg style="left:0;top:0" width="1445" height="713" viewBox="0 0 1445 713" fill="#000"><rect x="45.10" y="58.98" width="90.00" height="1.85"/><rect x="45.10" y="138.92" width="90.00" height="1.85"/><rect x="45.08" y="58.98" width="1.85" height="610.42"/><rect x="133.27" y="58.98" width="1.85" height="610.42"/><rect x="138.30" y="58.98" width="755.20" height="1.85"/><rect x="138.30" y="98.92" width="1291.70" height="1.85"/><rect x="138.30" y="138.92" width="992.90" height="1.85"/><rect x="262.88" y="58.98" width="1.85" height="81.80"/><rect x="449.12" y="58.98" width="1.85" height="81.80"/><rect x="537.88" y="58.98" width="1.85" height="81.80"/><rect x="902.28" y="98.92" width="1.85" height="41.85"/><rect x="1016.18" y="98.92" width="1.85" height="41.85"/><rect x="1129.38" y="98.92" width="1.85" height="41.85"/><rect x="1134.08" y="98.92" width="1.85" height="41.85"/><rect x="1233.67" y="98.92" width="1.85" height="41.85"/><rect x="1428.17" y="98.92" width="1.85" height="41.85"/><rect x="262.88" y="144.70" width="1.85" height="524.70"/><rect x="537.88" y="144.70" width="1.85" height="524.70"/><rect x="902.28" y="144.70" width="1.85" height="524.70"/><rect x="1016.18" y="144.70" width="1.85" height="524.70"/><rect x="1129.38" y="144.70" width="1.85" height="524.70"/><rect x="1134.08" y="144.70" width="1.85" height="524.70"/><rect x="1233.67" y="144.70" width="1.85" height="524.70"/><rect x="1428.17" y="144.70" width="1.85" height="524.70"/><rect x="449.12" y="144.70" width="1.85" height="294.80"/><rect x="449.12" y="460.20" width="1.85" height="209.20"/></svg>
<div style="left:1131px;top:98px;width:3px;height:43px;background:#fff;"></div>
<div style="left:135px;top:7px;width:3px;height:663px;background:#c6c6c6;"></div>
<div style="left:138px;top:7px;width:1px;height:663px;background:rgba(198,198,198,0.4);"></div>
<div style="left:0px;top:141px;width:1440px;height:3px;background:#cacaca;"></div>
<div style="left:0px;top:144px;width:1440px;height:1px;background:#e6e6e6;"></div>
<svg style="left:36px;top:49px" width="20" height="20" viewBox="36 49 20 20"><path d="M40.4 60.6V53.6H45.2V57" fill="none" stroke="#1a6fe8" stroke-width="2"/><circle cx="46.5" cy="60.5" r="4.3" fill="#fff"/><circle cx="46.5" cy="60.5" r="3.6" fill="#1257d3"/></svg>
<div style="left:56.85px;top:79px;line-height:19px;height:19px;font-size:16.9px;transform:translateY(0.80px) scaleX(0.9051);transform-origin:0 0;color:#24495a;font-weight:bold;white-space:nowrap;text-shadow:0 0 0.5px #24495a">Category</div>
<div style="left:66.85px;top:118px;line-height:19px;height:19px;font-size:16.9px;transform:translateY(0.30px) scaleX(0.9136);transform-origin:0 0;color:#24495a;font-weight:bold;white-space:nowrap;text-shadow:0 0 0.5px #24495a">Month</div>
<div style="left:138.5px;top:112px;width:36.5px;height:18px;overflow:hidden"><div style="left:136.50px;top:112px;line-height:16px;height:16px;font-size:14.8px;transform:translateY(0.40px) scaleX(0.8749);transform-origin:0 0;color:#1b4268;font-weight:bold;white-space:nowrap;text-shadow:0 0 0.5px #1b4268;left:-2.00px;top:0">IRA</div></div>
<div style="left:194.65px;top:104px;line-height:16px;height:16px;font-size:14.8px;transform:translateY(0.60px) scaleX(0.8663);transform-origin:0 0;color:#1b4268;font-weight:bold;white-space:nowrap;text-shadow:0 0 0.5px #1b4268">Rollover</div>
<div style="left:203.90px;top:120px;line-height:16px;height:16px;font-size:14.8px;transform:translateY(0.70px) scaleX(0.9270);transform-origin:0 0;color:#1b4268;font-weight:bold;white-space:nowrap;text-shadow:0 0 0.5px #1b4268">401K</div>
<div style="left:267.80px;top:70px;line-height:19px;height:19px;font-size:16.9px;transform:translateY(0.90px) scaleX(0.9118);transform-origin:0 0;color:#24495a;font-weight:bold;white-space:nowrap;text-shadow:0 0 0.5px #24495a">Other Investments</div>
<div style="left:280.80px;top:112px;line-height:16px;height:16px;font-size:14.8px;transform:translateY(0.40px) scaleX(0.8796);transform-origin:0 0;color:#24495a;font-weight:bold;white-space:nowrap;text-shadow:0 0 0.5px #24495a">Brokerage</div>
<div style="left:385.30px;top:112px;line-height:16px;height:16px;font-size:14.8px;transform:translateY(0.40px) scaleX(0.8681);transform-origin:0 0;color:#24495a;font-weight:bold;white-space:nowrap;text-shadow:0 0 0.5px #24495a">Crypto</div>
<div style="left:451px;top:70px;width:87px;height:21px;overflow:hidden"><div style="left:452.90px;top:70px;line-height:19px;height:19px;font-size:16.9px;transform:translateY(0.90px) scaleX(0.9122);transform-origin:0 0;color:#24495a;font-weight:bold;white-space:nowrap;text-shadow:0 0 0.5px #24495a;left:1.90px;top:0">Miscellaneous</div></div>
<div style="left:479.75px;top:112px;line-height:16px;height:16px;font-size:14.8px;transform:translateY(0.40px) scaleX(0.9087);transform-origin:0 0;color:#24495a;font-weight:bold;white-space:nowrap;text-shadow:0 0 0.5px #24495a">Misc</div>
<div style="left:541.50px;top:70px;line-height:19px;height:19px;font-size:16.9px;transform:translateY(0.90px) scaleX(0.9112);transform-origin:0 0;color:#24495a;font-weight:bold;white-space:nowrap;text-shadow:0 0 0.5px #24495a">Debts- Input as negative numbers</div>
<div style="left:568.20px;top:112px;line-height:16px;height:16px;font-size:14.8px;transform:translateY(0.40px) scaleX(0.8486);transform-origin:0 0;color:#1b4268;font-weight:bold;white-space:nowrap;text-shadow:0 0 0.5px #1b4268">Loan</div>
<div style="left:662.90px;top:112px;line-height:16px;height:16px;font-size:14.8px;transform:translateY(0.40px) scaleX(0.8420);transform-origin:0 0;color:#1b4268;font-weight:bold;white-space:nowrap;text-shadow:0 0 0.5px #1b4268">CC</div>
<div style="left:735.85px;top:104px;line-height:16px;height:16px;font-size:14.8px;transform:translateY(0.60px) scaleX(0.8877);transform-origin:0 0;color:#1b4268;font-weight:bold;white-space:nowrap;text-shadow:0 0 0.5px #1b4268">Student</div>
<div style="left:741.80px;top:120px;line-height:16px;height:16px;font-size:14.8px;transform:translateY(0.70px) scaleX(0.8489);transform-origin:0 0;color:#1b4268;font-weight:bold;white-space:nowrap;text-shadow:0 0 0.5px #1b4268">Loans</div>
<div style="left:835.20px;top:112px;line-height:16px;height:16px;font-size:14.8px;transform:translateY(0.40px) scaleX(0.8766);transform-origin:0 0;color:#1b4268;font-weight:bold;white-space:nowrap;text-shadow:0 0 0.5px #1b4268">Plan</div>
<div style="left:914.95px;top:111px;line-height:19px;height:19px;font-size:16.9px;transform:translateY(0.30px) scaleX(0.9177);transform-origin:0 0;color:#fff;font-weight:bold;white-space:nowrap;text-shadow:0 0 0.5px #fff">Total Assets</div>
<div style="left:1055.75px;top:101px;line-height:19px;height:19px;font-size:16.9px;transform:translateY(0.50px) scaleX(0.9127);transform-origin:0 0;color:#fff;font-weight:bold;white-space:nowrap;text-shadow:0 0 0.5px #fff">Total</div>
<div style="left:1038.85px;top:120px;line-height:19px;height:19px;font-size:16.9px;transform:translateY(0.60px) scaleX(0.9019);transform-origin:0 0;color:#fff;font-weight:bold;white-space:nowrap;text-shadow:0 0 0.5px #fff">Liabilities</div>
<div style="left:1147.75px;top:111px;line-height:19px;height:19px;font-size:16.9px;transform:translateY(0.30px) scaleX(0.9189);transform-origin:0 0;color:#fff;font-weight:bold;white-space:nowrap;text-shadow:0 0 0.5px #fff">Net Worth</div>
<div style="left:1249.40px;top:111px;line-height:19px;height:19px;font-size:16.9px;transform:translateY(0.30px) scaleX(0.9018);transform-origin:0 0;color:#24495a;font-weight:bold;white-space:nowrap;text-shadow:0 0 0.5px #24495a">$ Change</div>
<div style="left:1345.15px;top:111px;line-height:19px;height:19px;font-size:16.9px;transform:translateY(0.30px) scaleX(0.8703);transform-origin:0 0;color:#24495a;font-weight:bold;white-space:nowrap;text-shadow:0 0 0.5px #24495a">% Change</div>
<div class="d" style="left:138px;top:147.0px;width:37px;color:#24495a"><div style="right:2.9px;top:0">$1,619</div></div>
<div class="d" style="left:138px;top:168.0px;width:37px;color:#24495a"><div style="right:2.9px;top:0">$1,628</div></div>
<div class="d" style="left:138px;top:189.0px;width:37px;color:#24495a"><div style="right:2.9px;top:0">$1,716</div></div>
<div class="d" style="left:138px;top:210.0px;width:37px;color:#24495a"><div style="right:2.9px;top:0">$2,471</div></div>
<div class="d" style="left:138px;top:231.0px;width:37px;color:#24495a"><div style="right:2.9px;top:0">$2,516</div></div>
<div class="d" style="left:138px;top:252.0px;width:37px;color:#24495a"><div style="right:2.9px;top:0">$2,633</div></div>
<div class="d" style="left:138px;top:273.0px;width:37px;color:#24495a"><div style="right:2.9px;top:0">$2,993</div></div>
<div class="d" style="left:138px;top:294.0px;width:37px;color:#24495a"><div style="right:2.9px;top:0">$3,262</div></div>
<div class="d" style="left:138px;top:315.0px;width:37px;color:#24495a"><div style="right:2.9px;top:0">$3,592</div></div>
<div class="d" style="left:138px;top:336.0px;width:37px;color:#24495a"><div style="right:2.9px;top:0">$3,762</div></div>
<div class="d" style="left:138px;top:357.0px;width:37px;color:#24495a"><div style="right:2.9px;top:0">$3,975</div></div>
<div class="d" style="left:138px;top:378.0px;width:37px;color:#24495a"><div style="right:2.9px;top:0">$4,232</div></div>
<div class="d" style="left:138px;top:399.0px;width:37px;color:#24495a"><div style="right:2.9px;top:0">$4,333</div></div>
<div class="d" style="left:138px;top:420.0px;width:37px;color:#24495a"><div style="right:2.9px;top:0">$4,469</div></div>
<div class="d" style="left:138px;top:441.0px;width:37px;color:#24495a"><div style="right:2.9px;top:0">$4,386</div></div>
<div class="d" style="left:176px;top:147.0px;width:88px;color:#24495a"><div style="right:2.9px;top:0">$5,908</div></div>
<div class="d" style="left:176px;top:168.0px;width:88px;color:#24495a"><div style="right:2.9px;top:0">$5,974</div></div>
<div class="d" style="left:176px;top:189.0px;width:88px;color:#24495a"><div style="right:2.9px;top:0">$6,292</div></div>
<div class="d" style="left:176px;top:210.0px;width:88px;color:#24495a"><div style="right:2.9px;top:0">$6,493</div></div>
<div class="d" style="left:176px;top:231.0px;width:88px;color:#24495a"><div style="right:2.9px;top:0">$6,215</div></div>
<div class="d" style="left:176px;top:252.0px;width:88px;color:#24495a"><div style="right:2.9px;top:0">$6,512</div></div>
<div class="d" style="left:176px;top:273.0px;width:88px;color:#24495a"><div style="right:2.9px;top:0">$6,689</div></div>
<div class="d" style="left:176px;top:294.0px;width:88px;color:#24495a"><div style="right:2.9px;top:0">$6,841</div></div>
<div class="d" style="left:176px;top:315.0px;width:88px;color:#24495a"><div style="right:2.9px;top:0">$6,987</div></div>
<div class="d" style="left:176px;top:336.0px;width:88px;color:#24495a"><div style="right:2.9px;top:0">$7,107</div></div>
<div class="d" style="left:176px;top:357.0px;width:88px;color:#24495a"><div style="right:2.9px;top:0">$7,076</div></div>
<div class="d" style="left:176px;top:378.0px;width:88px;color:#24495a"><div style="right:2.9px;top:0">$7,551</div></div>
<div class="d" style="left:176px;top:399.0px;width:88px;color:#24495a;font-weight:bold"><div style="right:2.9px;top:0">$7,321</div></div>
<div class="d" style="left:176px;top:420.0px;width:88px;color:#24495a"><div style="right:2.9px;top:0">$7,543</div></div>
<div class="d" style="left:176px;top:441.0px;width:88px;color:#24495a"><div style="right:2.9px;top:0">$7,400</div></div>
<div class="d" style="left:265px;top:147.0px;width:96px;color:#24495a"><div style="right:2.9px;top:0">$16</div></div>
<div class="d" style="left:265px;top:168.0px;width:96px;color:#24495a"><div style="right:2.9px;top:0">$15</div></div>
<div class="d" style="left:265px;top:189.0px;width:96px;color:#24495a"><div style="right:2.9px;top:0">$13</div></div>
<div class="d" style="left:265px;top:210.0px;width:96px;color:#24495a"><div style="right:2.9px;top:0">$13</div></div>
<div class="d" style="left:265px;top:231.0px;width:96px;color:#24495a"><div style="right:2.9px;top:0">$11</div></div>
<div class="d" style="left:265px;top:252.0px;width:96px;color:#24495a"><div style="right:2.9px;top:0">$13</div></div>
<div class="d" style="left:265px;top:273.0px;width:96px;color:#24495a"><div style="right:2.9px;top:0">$12</div></div>
<div class="d" style="left:265px;top:294.0px;width:96px;color:#24495a"><div style="right:2.9px;top:0">$15</div></div>
<div class="d" style="left:265px;top:315.0px;width:96px;color:#24495a"><div style="right:2.9px;top:0">$15</div></div>
<div class="d" style="left:265px;top:336.0px;width:96px;color:#24495a"><div style="right:2.9px;top:0">$16</div></div>
<div class="d" style="left:265px;top:357.0px;width:96px;color:#24495a"><div style="right:2.9px;top:0">$14</div></div>
<div class="d" style="left:265px;top:378.0px;width:96px;color:#24495a"><div style="right:2.9px;top:0">$15</div></div>
<div class="d" style="left:265px;top:399.0px;width:96px;color:#24495a"><div style="right:2.9px;top:0">$15</div></div>
<div class="d" style="left:265px;top:420.0px;width:96px;color:#24495a"><div style="right:2.9px;top:0">$13</div></div>
<div class="d" style="left:265px;top:441.0px;width:96px;color:#24495a"><div style="right:2.9px;top:0">$13</div></div>
<div class="d" style="left:362px;top:147.0px;width:88px;color:#24495a"><div style="right:2.9px;top:0">$471</div></div>
<div class="d" style="left:362px;top:168.0px;width:88px;color:#24495a"><div style="right:2.9px;top:0">$405</div></div>
<div class="d" style="left:362px;top:189.0px;width:88px;color:#24495a"><div style="right:2.9px;top:0">$592</div></div>
<div class="d" style="left:362px;top:210.0px;width:88px;color:#24495a"><div style="right:2.9px;top:0">$599</div></div>
<div class="d" style="left:362px;top:231.0px;width:88px;color:#24495a"><div style="right:2.9px;top:0">$480</div></div>
<div class="d" style="left:362px;top:252.0px;width:88px;color:#24495a"><div style="right:2.9px;top:0">$545</div></div>
<div class="d" style="left:362px;top:273.0px;width:88px;color:#24495a"><div style="right:2.9px;top:0">$492</div></div>
<div class="d" style="left:362px;top:294.0px;width:88px;color:#24495a"><div style="right:2.9px;top:0">$482</div></div>
<div class="d" style="left:362px;top:315.0px;width:88px;color:#24495a"><div style="right:2.9px;top:0">$417</div></div>
<div class="d" style="left:362px;top:336.0px;width:88px;color:#24495a"><div style="right:2.9px;top:0">$443</div></div>
<div class="d" style="left:362px;top:357.0px;width:88px;color:#24495a"><div style="right:2.9px;top:0">$452</div></div>
<div class="d" style="left:362px;top:378.0px;width:88px;color:#24495a"><div style="right:2.9px;top:0">$878</div></div>
<div class="d" style="left:362px;top:399.0px;width:88px;color:#24495a"><div style="right:2.9px;top:0">$771</div></div>
<div class="d" style="left:362px;top:420.0px;width:88px;color:#24495a"><div style="right:2.9px;top:0">$812</div></div>
<div class="d" style="left:362px;top:441.0px;width:88px;color:#24495a"><div style="right:2.9px;top:0">$594</div></div>
<div class="d" style="left:451px;top:147.0px;width:87px;color:#24495a"><div style="right:2.9px;top:0">$50</div></div>
<div class="d" style="left:451px;top:168.0px;width:87px;color:#24495a"><div style="right:2.9px;top:0">$50</div></div>
<div class="d" style="left:451px;top:189.0px;width:87px;color:#24495a"><div style="right:2.9px;top:0">$50</div></div>
<div class="d" style="left:451px;top:210.0px;width:87px;color:#24495a"><div style="right:2.9px;top:0">$50</div></div>
<div class="d" style="left:451px;top:231.0px;width:87px;color:#24495a"><div style="right:2.9px;top:0">$50</div></div>
<div class="d" style="left:451px;top:252.0px;width:87px;color:#24495a"><div style="right:2.9px;top:0">$100</div></div>
<div class="d" style="left:451px;top:273.0px;width:87px;color:#24495a"><div style="right:2.9px;top:0">$100</div></div>
<div class="d" style="left:451px;top:294.0px;width:87px;color:#24495a"><div style="right:2.9px;top:0">$100</div></div>
<div class="d" style="left:451px;top:315.0px;width:87px;color:#24495a"><div style="right:2.9px;top:0">$0</div></div>
<div class="d" style="left:451px;top:336.0px;width:87px;color:#24495a"><div style="right:2.9px;top:0">$0</div></div>
<div class="d" style="left:451px;top:357.0px;width:87px;color:#24495a"><div style="right:2.9px;top:0">$0</div></div>
<div class="d" style="left:451px;top:378.0px;width:87px;color:#24495a"><div style="right:2.9px;top:0">$0</div></div>
<div class="d" style="left:451px;top:399.0px;width:87px;color:#24495a"><div style="right:2.9px;top:0">$0</div></div>
<div class="d" style="left:451px;top:420.0px;width:87px;color:#24495a"><div style="right:2.9px;top:0">$4</div></div>
<div class="d" style="left:451px;top:441.0px;width:87px;color:#24495a"><div style="right:2.9px;top:0">$4</div></div>
<div class="d" style="left:539px;top:147.0px;width:88px;color:#24495a"><div style="right:2.9px;top:0">-$2,644</div></div>
<div class="d" style="left:539px;top:168.0px;width:88px;color:#24495a"><div style="right:2.9px;top:0">-$2,408</div></div>
<div class="d" style="left:539px;top:189.0px;width:88px;color:#24495a"><div style="right:2.9px;top:0">-$2,170</div></div>
<div class="d" style="left:539px;top:210.0px;width:88px;color:#24495a"><div style="right:2.9px;top:0">-$1,930</div></div>
<div class="d" style="left:539px;top:231.0px;width:88px;color:#24495a"><div style="right:2.9px;top:0">-$1,690</div></div>
<div class="d" style="left:539px;top:252.0px;width:88px;color:#24495a"><div style="right:2.9px;top:0">-$1,449</div></div>
<div class="d" style="left:539px;top:273.0px;width:88px;color:#24495a"><div style="right:2.9px;top:0">-$1,206</div></div>
<div class="d" style="left:539px;top:294.0px;width:88px;color:#24495a"><div style="right:2.9px;top:0">-$962</div></div>
<div class="d" style="left:539px;top:315.0px;width:88px;color:#24495a"><div style="right:2.9px;top:0">-$717</div></div>
<div class="d" style="left:539px;top:336.0px;width:88px;color:#24495a"><div style="right:2.9px;top:0">-$473</div></div>
<div class="d" style="left:539px;top:357.0px;width:88px;color:#24495a"><div style="right:2.9px;top:0">$0</div></div>
<div class="d" style="left:539px;top:378.0px;width:88px;color:#24495a"><div style="right:2.9px;top:0">$0</div></div>
<div class="d" style="left:539px;top:399.0px;width:88px;color:#24495a"><div style="right:2.9px;top:0">$0</div></div>
<div class="d" style="left:539px;top:420.0px;width:88px;color:#24495a"><div style="right:2.9px;top:0">$0</div></div>
<div class="d" style="left:539px;top:441.0px;width:88px;color:#24495a"><div style="right:2.9px;top:0">$0</div></div>
<div class="d" style="left:628px;top:147.0px;width:87px;color:#24495a"><div style="right:2.9px;top:0">-$4,176</div></div>
<div class="d" style="left:628px;top:168.0px;width:87px;color:#24495a"><div style="right:2.9px;top:0">-$3,174</div></div>
<div class="d" style="left:628px;top:189.0px;width:87px;color:#24495a"><div style="right:2.9px;top:0">-$4,896</div></div>
<div class="d" style="left:628px;top:210.0px;width:87px;color:#24495a"><div style="right:2.9px;top:0">-$5,183</div></div>
<div class="d" style="left:628px;top:231.0px;width:87px;color:#24495a"><div style="right:2.9px;top:0">-$6,092</div></div>
<div class="d" style="left:628px;top:252.0px;width:87px;color:#24495a"><div style="right:2.9px;top:0">-$7,931</div></div>
<div class="d" style="left:628px;top:273.0px;width:87px;color:#24495a"><div style="right:2.9px;top:0">-$7,179</div></div>
<div class="d" style="left:628px;top:294.0px;width:87px;color:#24495a"><div style="right:2.9px;top:0">-$3,196</div></div>
<div class="d" style="left:628px;top:315.0px;width:87px;color:#24495a"><div style="right:2.9px;top:0">-$3,815</div></div>
<div class="d" style="left:628px;top:336.0px;width:87px;color:#24495a"><div style="right:2.9px;top:0">-$4,566</div></div>
<div class="d" style="left:628px;top:357.0px;width:87px;color:#24495a"><div style="right:2.9px;top:0">-$3,864</div></div>
<div class="d" style="left:628px;top:378.0px;width:87px;color:#24495a"><div style="right:2.9px;top:0">-$5,637</div></div>
<div class="d" style="left:628px;top:399.0px;width:87px;color:#24495a"><div style="right:2.9px;top:0">-$4,452</div></div>
<div class="d" style="left:628px;top:420.0px;width:87px;color:#24495a"><div style="right:2.9px;top:0">-$2,887</div></div>
<div class="d" style="left:628px;top:441.0px;width:87px;color:#24495a"><div style="right:2.9px;top:0">-$3,865</div></div>
<div class="d" style="left:716px;top:147.0px;width:88px;color:#24495a"><div style="right:2.9px;top:0">-$44,627</div></div>
<div class="d" style="left:716px;top:168.0px;width:88px;color:#24495a"><div style="right:2.9px;top:0">-$44,225</div></div>
<div class="d" style="left:716px;top:189.0px;width:88px;color:#24495a"><div style="right:2.9px;top:0">-$43,757</div></div>
<div class="d" style="left:716px;top:210.0px;width:88px;color:#24495a"><div style="right:2.9px;top:0">-$43,313</div></div>
<div class="d" style="left:716px;top:231.0px;width:88px;color:#24495a"><div style="right:2.9px;top:0">-$42,997</div></div>
<div class="d" style="left:716px;top:252.0px;width:88px;color:#24495a"><div style="right:2.9px;top:0">-$42,414</div></div>
<div class="d" style="left:716px;top:273.0px;width:88px;color:#24495a"><div style="right:2.9px;top:0">-$41,920</div></div>
<div class="d" style="left:716px;top:294.0px;width:88px;color:#24495a"><div style="right:2.9px;top:0">-$40,910</div></div>
<div class="d" style="left:716px;top:315.0px;width:88px;color:#24495a"><div style="right:2.9px;top:0">-$40,199</div></div>
<div class="d" style="left:716px;top:336.0px;width:88px;color:#24495a"><div style="right:2.9px;top:0">-$39,467</div></div>
<div class="d" style="left:716px;top:357.0px;width:88px;color:#24495a"><div style="right:2.9px;top:0">-$38,764</div></div>
<div class="d" style="left:716px;top:378.0px;width:88px;color:#24495a"><div style="right:2.9px;top:0">-$38,023</div></div>
<div class="d" style="left:716px;top:399.0px;width:88px;color:#24495a"><div style="right:2.9px;top:0">-$37,289</div></div>
<div class="d" style="left:716px;top:420.0px;width:88px;color:#24495a"><div style="right:2.9px;top:0">-$41,198</div></div>
<div class="d" style="left:716px;top:441.0px;width:88px;color:#24495a"><div style="right:2.9px;top:0">-$39,920</div></div>
<div class="d" style="left:805px;top:147.0px;width:88px;color:#24495a"><div style="right:2.9px;top:0">-$1,107</div></div>
<div class="d" style="left:805px;top:168.0px;width:88px;color:#24495a"><div style="right:2.9px;top:0">-$1,053</div></div>
<div class="d" style="left:805px;top:189.0px;width:88px;color:#24495a"><div style="right:2.9px;top:0">-$2,847</div></div>
<div class="d" style="left:805px;top:210.0px;width:88px;color:#24495a"><div style="right:2.9px;top:0">-$2,593</div></div>
<div class="d" style="left:805px;top:231.0px;width:88px;color:#24495a"><div style="right:2.9px;top:0">-$2,339</div></div>
<div class="d" style="left:805px;top:252.0px;width:88px;color:#24495a"><div style="right:2.9px;top:0">-$2,085</div></div>
<div class="d" style="left:805px;top:273.0px;width:88px;color:#24495a"><div style="right:2.9px;top:0">-$1,832</div></div>
<div class="d" style="left:805px;top:294.0px;width:88px;color:#24495a"><div style="right:2.9px;top:0">-$1,578</div></div>
<div class="d" style="left:805px;top:315.0px;width:88px;color:#24495a"><div style="right:2.9px;top:0">-$1,324</div></div>
<div class="d" style="left:805px;top:336.0px;width:88px;color:#24495a"><div style="right:2.9px;top:0">-$1,162</div></div>
<div class="d" style="left:805px;top:357.0px;width:88px;color:#24495a"><div style="right:2.9px;top:0">-$999</div></div>
<div class="d" style="left:805px;top:378.0px;width:88px;color:#24495a"><div style="right:2.9px;top:0">-$837</div></div>
<div class="d" style="left:805px;top:399.0px;width:88px;color:#24495a"><div style="right:2.9px;top:0">-$674</div></div>
<div class="d" style="left:805px;top:420.0px;width:88px;color:#24495a"><div style="right:2.9px;top:0">-$515</div></div>
<div class="d" style="left:805px;top:441.0px;width:88px;color:#24495a"><div style="right:2.9px;top:0">-$374</div></div>
<div class="d" style="left:904px;top:147.0px;width:113px;color:#24495a"><div style="right:2.9px;top:0">$35,735</div></div>
<div class="d" style="left:904px;top:168.0px;width:113px;color:#24495a"><div style="right:2.9px;top:0">$36,853</div></div>
<div class="d" style="left:904px;top:189.0px;width:113px;color:#24495a"><div style="right:2.9px;top:0">$44,061</div></div>
<div class="d" style="left:904px;top:210.0px;width:113px;color:#24495a"><div style="right:2.9px;top:0">$50,713</div></div>
<div class="d" style="left:904px;top:231.0px;width:113px;color:#24495a"><div style="right:2.9px;top:0">$52,162</div></div>
<div class="d" style="left:904px;top:252.0px;width:113px;color:#24495a"><div style="right:2.9px;top:0">$53,149</div></div>
<div class="d" style="left:904px;top:273.0px;width:113px;color:#24495a"><div style="right:2.9px;top:0">$55,724</div></div>
<div class="d" style="left:904px;top:294.0px;width:113px;color:#24495a"><div style="right:2.9px;top:0">$54,735</div></div>
<div class="d" style="left:904px;top:315.0px;width:113px;color:#24495a"><div style="right:2.9px;top:0">$58,195</div></div>
<div class="d" style="left:904px;top:336.0px;width:113px;color:#24495a"><div style="right:2.9px;top:0">$61,347</div></div>
<div class="d" style="left:904px;top:357.0px;width:113px;color:#24495a"><div style="right:2.9px;top:0">$65,167</div></div>
<div class="d" style="left:904px;top:378.0px;width:113px;color:#24495a"><div style="right:2.9px;top:0">$69,650</div></div>
<div class="d" style="left:904px;top:399.0px;width:113px;color:#24495a"><div style="right:2.9px;top:0">$68,888</div></div>
<div class="d" style="left:904px;top:420.0px;width:113px;color:#24495a"><div style="right:2.9px;top:0">$75,213</div></div>
<div class="d" style="left:904px;top:441.0px;width:113px;color:#24495a"><div style="right:2.9px;top:0">$78,432</div></div>
<div class="d" style="left:1018px;top:147.0px;width:112px;color:#24495a"><div style="right:2.9px;top:0">-$52,554</div></div>
<div class="d" style="left:1018px;top:168.0px;width:112px;color:#24495a"><div style="right:2.9px;top:0">-$50,859</div></div>
<div class="d" style="left:1018px;top:189.0px;width:112px;color:#24495a"><div style="right:2.9px;top:0">-$53,669</div></div>
<div class="d" style="left:1018px;top:210.0px;width:112px;color:#24495a"><div style="right:2.9px;top:0">-$53,020</div></div>
<div class="d" style="left:1018px;top:231.0px;width:112px;color:#24495a"><div style="right:2.9px;top:0">-$53,118</div></div>
<div class="d" style="left:1018px;top:252.0px;width:112px;color:#24495a"><div style="right:2.9px;top:0">-$53,879</div></div>
<div class="d" style="left:1018px;top:273.0px;width:112px;color:#24495a"><div style="right:2.9px;top:0">-$52,137</div></div>
<div class="d" style="left:1018px;top:294.0px;width:112px;color:#24495a"><div style="right:2.9px;top:0">-$46,645</div></div>
<div class="d" style="left:1018px;top:315.0px;width:112px;color:#24495a"><div style="right:2.9px;top:0">-$46,054</div></div>
<div class="d" style="left:1018px;top:336.0px;width:112px;color:#24495a"><div style="right:2.9px;top:0">-$45,667</div></div>
<div class="d" style="left:1018px;top:357.0px;width:112px;color:#24495a"><div style="right:2.9px;top:0">-$43,627</div></div>
<div class="d" style="left:1018px;top:378.0px;width:112px;color:#24495a"><div style="right:2.9px;top:0">-$44,497</div></div>
<div class="d" style="left:1018px;top:399.0px;width:112px;color:#24495a"><div style="right:2.9px;top:0">-$42,416</div></div>
<div class="d" style="left:1018px;top:420.0px;width:112px;color:#24495a"><div style="right:2.9px;top:0">-$44,600</div></div>
<div class="d" style="left:1018px;top:441.0px;width:112px;color:#24495a"><div style="right:2.9px;top:0">-$44,159</div></div>
<div class="d" style="left:1135px;top:147.0px;width:99px;color:#cc0000"><div style="right:2.2px;top:0">-$16,819</div></div>
<div class="d" style="left:1135px;top:168.0px;width:99px;color:#cc0000"><div style="right:2.2px;top:0">-$14,006</div></div>
<div class="d" style="left:1135px;top:189.0px;width:99px;color:#cc0000"><div style="right:2.2px;top:0">-$9,608</div></div>
<div class="d" style="left:1135px;top:210.0px;width:99px;color:#cc0000"><div style="right:2.2px;top:0">-$2,307</div></div>
<div class="d" style="left:1135px;top:231.0px;width:99px;color:#cc0000"><div style="right:2.2px;top:0">-$956</div></div>
<div class="d" style="left:1135px;top:252.0px;width:99px;color:#cc0000"><div style="right:2.2px;top:0">-$730</div></div>
<div class="d" style="left:1135px;top:273.0px;width:99px;color:#38761d"><div style="right:2.2px;top:0">$3,587</div></div>
<div class="d" style="left:1135px;top:294.0px;width:99px;color:#38761d"><div style="right:2.2px;top:0">$8,090</div></div>
<div class="d" style="left:1135px;top:315.0px;width:99px;color:#38761d"><div style="right:2.2px;top:0">$12,141</div></div>
<div class="d" style="left:1135px;top:336.0px;width:99px;color:#38761d"><div style="right:2.2px;top:0">$15,680</div></div>
<div class="d" style="left:1135px;top:357.0px;width:99px;color:#38761d"><div style="right:2.2px;top:0">$21,540</div></div>
<div class="d" style="left:1135px;top:378.0px;width:99px;color:#38761d"><div style="right:2.2px;top:0">$25,153</div></div>
<div class="d" style="left:1135px;top:399.0px;width:99px;color:#38761d"><div style="right:2.2px;top:0">$26,472</div></div>
<div class="d" style="left:1135px;top:420.0px;width:99px;color:#38761d"><div style="right:2.2px;top:0">$30,613</div></div>
<div class="d" style="left:1135px;top:441.0px;width:99px;color:#38761d"><div style="right:2.2px;top:0">$34,273</div></div>
<div class="d" style="left:1235px;top:145.3px;width:97px;color:#24495a"><div style="left:0;right:0;top:0;text-align:center;transform-origin:50% 50%">-</div></div>
<div class="d" style="left:1235px;top:166.3px;width:97px;color:#38761d"><div style="right:3.6px;top:0">$2,813</div></div>
<div class="d" style="left:1235px;top:187.3px;width:97px;color:#38761d"><div style="right:3.6px;top:0">$4,398</div></div>
<div class="d" style="left:1235px;top:208.3px;width:97px;color:#38761d"><div style="right:3.6px;top:0">$7,302</div></div>
<div class="d" style="left:1235px;top:229.3px;width:97px;color:#38761d"><div style="right:3.6px;top:0">$1,351</div></div>
<div class="d" style="left:1235px;top:250.3px;width:97px;color:#38761d"><div style="right:3.6px;top:0">$226</div></div>
<div class="d" style="left:1235px;top:271.3px;width:97px;color:#38761d"><div style="right:3.6px;top:0">$4,316</div></div>
<div class="d" style="left:1235px;top:292.3px;width:97px;color:#38761d"><div style="right:3.6px;top:0">$4,503</div></div>
<div class="d" style="left:1235px;top:313.3px;width:97px;color:#38761d"><div style="right:3.6px;top:0">$4,051</div></div>
<div class="d" style="left:1235px;top:334.3px;width:97px;color:#38761d"><div style="right:3.6px;top:0">$3,538</div></div>
<div class="d" style="left:1235px;top:355.3px;width:97px;color:#38761d"><div style="right:3.6px;top:0">$5,860</div></div>
<div class="d" style="left:1235px;top:376.3px;width:97px;color:#38761d"><div style="right:3.6px;top:0">$3,613</div></div>
<div class="d" style="left:1235px;top:397.3px;width:97px;color:#38761d"><div style="right:3.6px;top:0">$1,320</div></div>
<div class="d" style="left:1235px;top:418.3px;width:97px;color:#38761d"><div style="right:3.6px;top:0">$4,141</div></div>
<div class="d" style="left:1235px;top:439.3px;width:97px;color:#38761d"><div style="right:3.6px;top:0">$3,659</div></div>
<div class="d" style="left:1333px;top:145.3px;width:96px;color:#24495a"><div style="left:0;right:0;top:0;text-align:center;transform-origin:50% 50%">-</div></div>
<div class="d" style="left:1333px;top:166.3px;width:96px;color:#38761d"><div style="right:3.6px;top:0">16.73%</div></div>
<div class="d" style="left:1333px;top:187.3px;width:96px;color:#38761d"><div style="right:3.6px;top:0">31.40%</div></div>
<div class="d" style="left:1333px;top:208.3px;width:96px;color:#38761d"><div style="right:3.6px;top:0">75.99%</div></div>
<div class="d" style="left:1333px;top:229.3px;width:96px;color:#38761d"><div style="right:3.6px;top:0">58.56%</div></div>
<div class="d" style="left:1333px;top:250.3px;width:96px;color:#38761d"><div style="right:3.6px;top:0">23.68%</div></div>
<div class="d" style="left:1333px;top:271.3px;width:96px;color:#38761d"><div style="right:3.6px;top:0">591.70%</div></div>
<div class="d" style="left:1333px;top:292.3px;width:96px;color:#38761d"><div style="right:3.6px;top:0">125.54%</div></div>
<div class="d" style="left:1333px;top:313.3px;width:96px;color:#38761d"><div style="right:3.6px;top:0">50.08%</div></div>
<div class="d" style="left:1333px;top:334.3px;width:96px;color:#38761d"><div style="right:3.6px;top:0">29.14%</div></div>
<div class="d" style="left:1333px;top:355.3px;width:96px;color:#38761d"><div style="right:3.6px;top:0">37.37%</div></div>
<div class="d" style="left:1333px;top:376.3px;width:96px;color:#38761d"><div style="right:3.6px;top:0">16.77%</div></div>
<div class="d" style="left:1333px;top:397.3px;width:96px;color:#38761d"><div style="right:3.6px;top:0">5.25%</div></div>
<div class="d" style="left:1333px;top:418.3px;width:96px;color:#38761d"><div style="right:3.6px;top:0">15.64%</div></div>
<div class="d" style="left:1333px;top:439.3px;width:96px;color:#38761d"><div style="right:3.6px;top:0">11.95%</div></div>
<div style="left:0px;top:669px;width:1445px;height:12px;background:#fff;"></div>
<div style="left:0px;top:669px;width:138px;height:12px;background:#f8f9fa;"></div>
<div style="left:0px;top:669px;width:1445px;height:1px;background:#e4e4e4;"></div>
<div style="left:135px;top:669px;width:3px;height:1px;background:#c6c6c6;"></div>
<div style="left:591px;top:671px;width:820px;height:8px;border-radius:4px;background:#dadce0"></div>
<div style="left:1414px;top:670px;width:1px;height:11px;background:#e8e8e8;"></div>
<div style="left:1427px;top:670px;width:1px;height:11px;background:#e8e8e8;"></div>
<div style="left:1440px;top:670px;width:1px;height:11px;background:#e8e8e8;"></div>
<svg style="left:1417px;top:672px" width="6" height="7" viewBox="0 0 6 7"><path d="M4.5 0.8L1.2 3.5L4.5 6.2z" fill="#8a8d91"/></svg>
<svg style="left:1431px;top:672px" width="6" height="7" viewBox="0 0 6 7"><path d="M1.5 0.8L4.8 3.5L1.5 6.2z" fill="#8a8d91"/></svg>
<svg style="left:1441px;top:645px" width="4" height="20" viewBox="0 0 4 20"><path d="M0.5 4.5L3 1.5L5.5 4.5zM0.5 15L3 18L5.5 15z" fill="#8a8d91"/></svg>
<div style="left:1441px;top:655px;width:4px;height:1px;background:#dfe3f5;"></div>
<div style="left:0px;top:681px;width:1445px;height:32px;background:#f6f9fd;"></div>
<div style="left:0px;top:680px;width:1445px;height:1px;background:#eceff3;"></div>
<div style="left:239.5px;top:681px;width:138.5px;height:32px;background:#dfe8f6;"></div>
<svg style="left:48px;top:692px" width="12" height="12" viewBox="0 0 12 12"><path d="M6 1.2v9.6M1.2 6h9.6" stroke="#444746" stroke-width="1.5"/></svg>
<svg style="left:82px;top:692px" width="14" height="12" viewBox="0 0 14 12"><path d="M0.5 2.2h12.7M0.5 5.9h12.7M0.5 9.6h12.7" stroke="#444746" stroke-width="1.5"/></svg>
<div style="left:128.9px;top:687px;line-height:22px;font-size:12.6px;letter-spacing:0.406px;color:#444746;font-weight:normal;white-space:nowrap;text-shadow:0 0 0.5px #444746">Visualizations</div>
<svg style="left:221.9px;top:696px" width="7" height="4" viewBox="0 0 7 4"><path d="M0 0h7L3.5 3.8z" fill="#444746"/></svg>
<div style="left:250.4px;top:687px;line-height:22px;font-size:12.6px;letter-spacing:0.350px;color:#0b57d0;font-weight:bold;white-space:nowrap;text-shadow:0 0 0.5px #0b57d0">Net Worth Input</div>
<svg style="left:360.6px;top:696px" width="7" height="4" viewBox="0 0 7 4"><path d="M0 0h7L3.5 3.8z" fill="#0b57d0"/></svg>
<div style="left:388.6px;top:687px;line-height:22px;font-size:12.6px;letter-spacing:0.412px;color:#444746;font-weight:normal;white-space:nowrap;text-shadow:0 0 0.5px #444746">Worksheet</div>
<svg style="left:463.2px;top:696px" width="7" height="4" viewBox="0 0 7 4"><path d="M0 0h7L3.5 3.8z" fill="#444746"/></svg>
<div style="left:0;top:703px;width:10px;height:10px;background:#000"></div>
<div style="left:0;top:693px;width:20px;height:20px;border-radius:0 0 0 9px;background:#f6f9fd"></div>
</div></body></html>
